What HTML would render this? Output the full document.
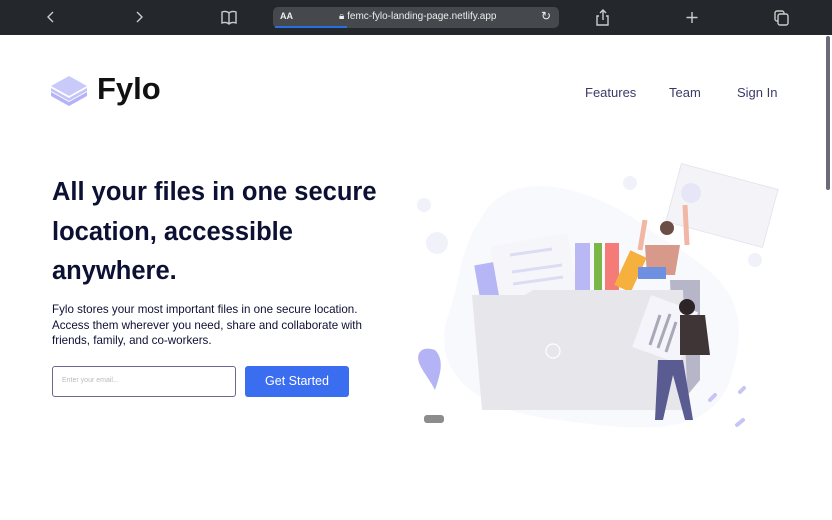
<!DOCTYPE html><html><head><style>
*{margin:0;padding:0;box-sizing:border-box}
body{width:832px;height:520px;overflow:hidden;background:#fff;font-family:"Liberation Sans",sans-serif;position:relative}
.bar{position:absolute;left:0;top:0;width:832px;height:35px;background:#24272b;color:#ddd}
.url{position:absolute;left:273px;top:7px;width:286px;height:21px;background:#45484d;border-radius:5px;font-size:10px;color:#eee}
.t{position:absolute;white-space:nowrap}
.nav{font-size:13px;color:#3a3a6a;top:85px}
h1{position:absolute;left:52px;top:173px;font-size:25.5px;line-height:39.5px;color:#0c1033;font-weight:bold;width:360px}
p{position:absolute;left:52px;top:302px;font-size:11.6px;line-height:15.5px;color:#0c1033;width:340px}
.in{position:absolute;left:52px;top:366px;width:184px;height:31px;border:1px solid #6b6890;border-radius:3px;font-size:7px;color:#bbb;padding:10px 9px}
.btn{position:absolute;left:245px;top:366px;width:104px;height:31px;background:#3a6df0;border-radius:3px;color:#fff;font-size:12.5px;text-align:center;line-height:31px}
</style></head><body>
<div class="bar">
<svg width="832" height="35" style="position:absolute;left:0;top:0" fill="none" stroke="#ccc" stroke-width="1.4">
<path d="M53 12l-5 5 5 5M137 12l5 5-5 5"/>
<path d="M222 12v11c3-1 5-1 7 1 2-2 4-2 7-1V12c-3-1-5-1-7 1-2-2-4-2-7-1zM229 13v11"/>
<path d="M599 16h-2v9h11v-9h-2M603 20v-10M600 13l3-3 3 3"/>
<path d="M692 12v11M686.5 17.5h11"/>
<rect x="775" y="11" width="9" height="10" rx="2"/><rect x="778" y="14" width="10" height="11" rx="2" fill="#24272b"/>
</svg>
<div class="url"><span class="t" style="left:7px;top:4px;font-size:9px;font-weight:bold">AA</span><span class="t" style="left:66px;top:4px">🔒︎ femc-fylo-landing-page.netlify.app</span><span class="t" style="left:268px;top:2px;font-size:12px">↻</span><div style="position:absolute;left:2px;bottom:0;width:72px;height:2px;background:#2a6fe0"></div></div>
</div>
<div style="position:absolute;left:826px;top:36px;width:4px;height:154px;background:#6a6a78;border-radius:2px"></div>
<svg width="40" height="32" style="position:absolute;left:51px;top:76px"><g fill="#b4b3f8"><path d="M18 0l18 10-18 10L0 10z" opacity=".7"/><path d="M0 16l18 10 18-10v4L18 30 0 20z"/><path d="M0 12l18 10 18-10v3L18 25 0 15z" opacity=".8"/></g></svg>
<span class="t" style="left:97px;top:71px;font-size:31px;font-weight:bold;color:#111">Fylo</span>
<span class="t nav" style="left:585px">Features</span><span class="t nav" style="left:669px">Team</span><span class="t nav" style="left:737px">Sign In</span>
<h1>All your files in one secure location, accessible anywhere.</h1>
<p>Fylo stores your most important files in one secure location. Access them wherever you need, share and collaborate with friends, family, and co-workers.</p>
<div class="in">Enter your email...</div><div class="btn">Get Started</div>
<svg width="400" height="280" style="position:absolute;left:400px;top:160px">
<path d="M80 60c30-60 120-30 170 10 60 40 110 60 80 150-20 60-100 50-170 40C60 250 30 200 50 150c10-30 10-60 30-90z" fill="#f8f9fd"/>
<circle cx="24" cy="45" r="7" fill="#f1f1fa"/><circle cx="37" cy="83" r="11" fill="#f1f1fa"/><circle cx="230" cy="23" r="7" fill="#f1f1fa"/><circle cx="355" cy="100" r="7" fill="#f1f1fa"/>
<rect x="77" y="103" width="25" height="40" fill="#b6b5f5" transform="rotate(-10 90 120)"/>
<rect x="95" y="80" width="78" height="62" fill="#f6f6fa" transform="rotate(-10 130 110)"/>
<path d="M110 95l42-6M112 112l50-7M113 124l50-7" stroke="#dcdcf5" stroke-width="3"/>
<rect x="175" y="83" width="15" height="50" fill="#b9b8f5"/><rect x="194" y="83" width="8" height="50" fill="#7ab648"/><rect x="205" y="83" width="14" height="50" fill="#f47b77"/>
<rect x="222" y="92" width="18" height="38" fill="#f5b03e" transform="rotate(25 230 110)"/>
<rect x="272" y="15" width="100" height="60" fill="#f4f4f8" stroke="#e5e5ef" transform="rotate(15 320 45)"/>
<circle cx="291" cy="33" r="10" fill="#e6e6f6"/>
<path d="M245 60l-5 30M285 45l2 40" stroke="#f2b7a4" stroke-width="5"/>
<path d="M245 85h35l-5 30h-28z" fill="#d6998a"/><rect x="238" y="107" width="28" height="12" fill="#6f8fe0"/>
<circle cx="267" cy="68" r="7" fill="#6b4f44"/>
<path d="M270 120h30v100l-25 30z" fill="#b7b6c8"/>
<path d="M72 135h53l8-5h150l5 120H82z" fill="#e6e6eb"/>
<circle cx="153" cy="191" r="7" fill="none" stroke="#fff" stroke-width="1.2"/>
<rect x="240" y="142" width="50" height="55" fill="#f4f4fa" transform="rotate(20 265 170)"/>
<path d="M250 185l10-30M258 188l12-34M266 192l10-30" stroke="#a8a8b8" stroke-width="3"/>
<path d="M280 155h25l5 40h-30z" fill="#403536"/><circle cx="287" cy="147" r="8" fill="#2c2426"/>
<path d="M258 200h25l10 60h-8l-12-45-10 45h-8z" fill="#5a5b90"/>
<path d="M35 190c-15-5-20 5-15 15 5 10 10 15 15 25 5-15 10-30 0-40z" fill="#b4b3f5"/>
<path d="M310 240l5-5M340 232l4-4M337 265l6-5" stroke="#c6c5f5" stroke-width="4" stroke-linecap="round"/>
<rect x="24" y="255" width="20" height="8" rx="3" fill="#8c8c8c"/>
</svg>
</body></html>
